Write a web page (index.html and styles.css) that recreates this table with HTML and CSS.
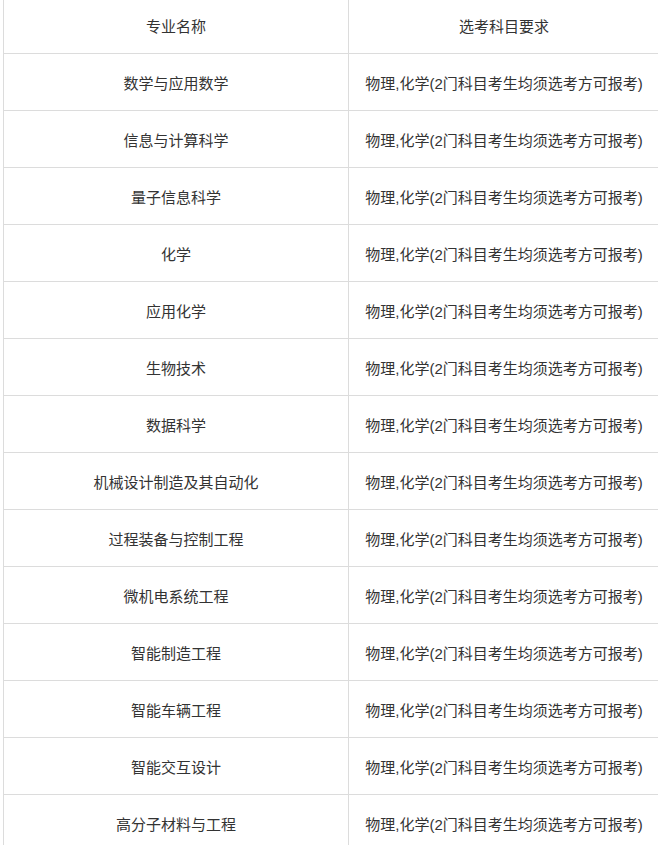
FILE: index.html
```html
<!DOCTYPE html>
<html lang="zh-CN">
<head>
<meta charset="utf-8">
<title>选考科目要求</title>
<link rel="stylesheet" href="styles.css">
</head>
<body>
<div class="wrap">
<table class="subjects">
  <thead>
    <tr><th class="c1">专业名称</th><th class="c2">选考科目要求</th></tr>
  </thead>
  <tbody>
    <tr><td>数学与应用数学</td><td>物理,化学(2门科目考生均须选考方可报考)</td></tr>
    <tr><td>信息与计算科学</td><td>物理,化学(2门科目考生均须选考方可报考)</td></tr>
    <tr><td>量子信息科学</td><td>物理,化学(2门科目考生均须选考方可报考)</td></tr>
    <tr><td>化学</td><td>物理,化学(2门科目考生均须选考方可报考)</td></tr>
    <tr><td>应用化学</td><td>物理,化学(2门科目考生均须选考方可报考)</td></tr>
    <tr><td>生物技术</td><td>物理,化学(2门科目考生均须选考方可报考)</td></tr>
    <tr><td>数据科学</td><td>物理,化学(2门科目考生均须选考方可报考)</td></tr>
    <tr><td>机械设计制造及其自动化</td><td>物理,化学(2门科目考生均须选考方可报考)</td></tr>
    <tr><td>过程装备与控制工程</td><td>物理,化学(2门科目考生均须选考方可报考)</td></tr>
    <tr><td>微机电系统工程</td><td>物理,化学(2门科目考生均须选考方可报考)</td></tr>
    <tr><td>智能制造工程</td><td>物理,化学(2门科目考生均须选考方可报考)</td></tr>
    <tr><td>智能车辆工程</td><td>物理,化学(2门科目考生均须选考方可报考)</td></tr>
    <tr><td>智能交互设计</td><td>物理,化学(2门科目考生均须选考方可报考)</td></tr>
    <tr><td>高分子材料与工程</td><td>物理,化学(2门科目考生均须选考方可报考)</td></tr>
  </tbody>
</table>
</div>
</body>
</html>
```
FILE: styles.css
```css
html, body {
  margin: 0;
  padding: 0;
  background: #fff;
}
body {
  overflow: hidden;
}
.wrap {
  margin-top: -4px;
  padding-left: 3px;
}
.subjects {
  border-collapse: collapse;
  table-layout: fixed;
  width: 657px;
  font-family: "Liberation Sans", "Noto Sans CJK SC", sans-serif;
  font-size: 15px;
  color: #333;
}
.subjects th,
.subjects td {
  border: 1px solid #dcdcdc;
  height: 56px;
  padding: 0;
  text-align: center;
  vertical-align: middle;
  font-weight: normal;
  white-space: nowrap;
}
.subjects .c1 {
  width: 344px;
}
```
